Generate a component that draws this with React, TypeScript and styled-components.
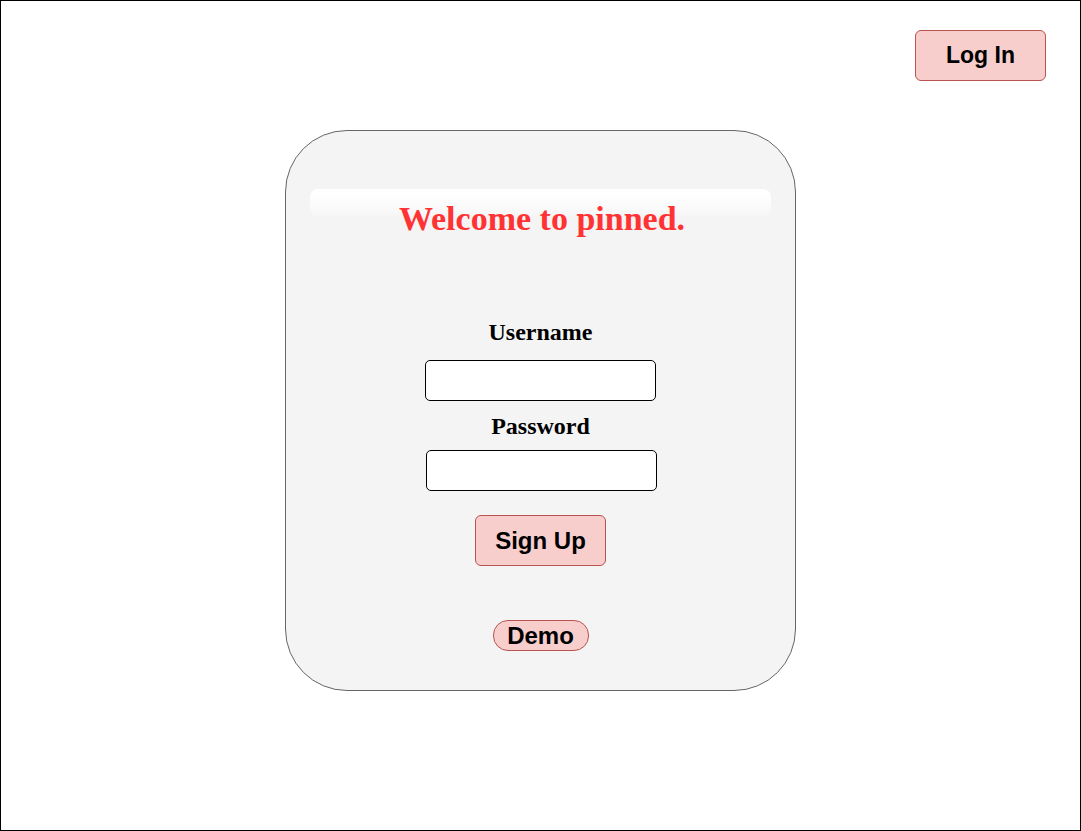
import React from "react";
import styled, { createGlobalStyle } from "styled-components";

const Global = createGlobalStyle`
  html, body { margin: 0; padding: 0; background: #fff; }
  * { box-sizing: border-box; }
`;

const Page = styled.div`
  width: 1081px;
  height: 831px;
  border: 1px solid #000;
  display: flex;
  flex-direction: column;
  align-items: center;
  font-family: "Liberation Serif", "Times New Roman", serif;
`;

const Header = styled.header`
  align-self: stretch;
  display: flex;
  justify-content: flex-end;
  padding: 29px 34px 0 0;
`;

const PinkButton = styled.button<{ $pill?: boolean; $size?: number }>`
  background: #f8cecc;
  border: 1px solid #b85450;
  border-radius: ${(p) => (p.$pill ? "15px" : "6px")};
  width: ${(p) => (p.$pill ? "96px" : "131px")};
  height: ${(p) => (p.$pill ? "31px" : "51px")};
  font-family: "Liberation Sans", Arial, sans-serif;
  font-weight: bold;
  font-size: ${(p) => p.$size ?? 23}px;
  color: #000;
  padding: 0;
  cursor: pointer;
`;

const Card = styled.main`
  margin-top: 49px;
  width: 511px;
  height: 561px;
  background: #f4f4f4;
  border: 1px solid #666;
  border-radius: 62px;
  display: flex;
  flex-direction: column;
  align-items: center;
  padding-top: 58px;
`;

const TitleBlock = styled.div`
  position: relative;
  align-self: stretch;
  margin: 0 24px;
  height: 60px;
  display: flex;
  justify-content: center;
  &::before {
    content: "";
    position: absolute;
    left: 0;
    right: 0;
    top: 0;
    height: 27px;
    border-radius: 8px;
    background: linear-gradient(to bottom, #ffffff 0%, #fdfdfd 40%, rgba(255,255,255,0.2) 100%);
  }
`;

const Title = styled.h1`
  position: relative;
  margin: 12px 0 0 3px;
  color: #ff3333;
  font-size: 34px;
  font-weight: bold;
  line-height: 36px;
`;

const Form = styled.form`
  margin-top: 69px;
  display: flex;
  flex-direction: column;
  align-items: center;
`;

const Label = styled.label`
  font-weight: bold;
  font-size: 24px;
  line-height: 28px;
  color: #000;
`;

const Input = styled.input<{ $shift?: number; $top?: number }>`
  width: 231px;
  height: 41px;
  border: 1px solid #000;
  border-radius: 5px;
  background: #fff;
  margin-top: ${(p) => p.$top ?? 10}px;
  margin-bottom: 11px;
  margin-left: ${(p) => p.$shift ?? 0}px;
`;

const SubmitRow = styled.div`
  margin-top: 13px;
  margin-bottom: 54px;
`;

export default function App() {
  return (
    <>
      <Global />
      <Page>
        <Header>
          <PinkButton type="button">Log In</PinkButton>
        </Header>
        <Card>
          <TitleBlock>
            <Title>Welcome to pinned.</Title>
          </TitleBlock>
          <Form onSubmit={(e) => e.preventDefault()}>
            <Label htmlFor="u">Username</Label>
            <Input id="u" type="text" $shift={0} $top={14} />
            <Label htmlFor="p">Password</Label>
            <Input id="p" type="password" $shift={2} />
            <SubmitRow>
              <PinkButton type="submit" $size={24}>Sign Up</PinkButton>
            </SubmitRow>
            <PinkButton type="button" $pill $size={24}>Demo</PinkButton>
          </Form>
        </Card>
      </Page>
    </>
  );
}
